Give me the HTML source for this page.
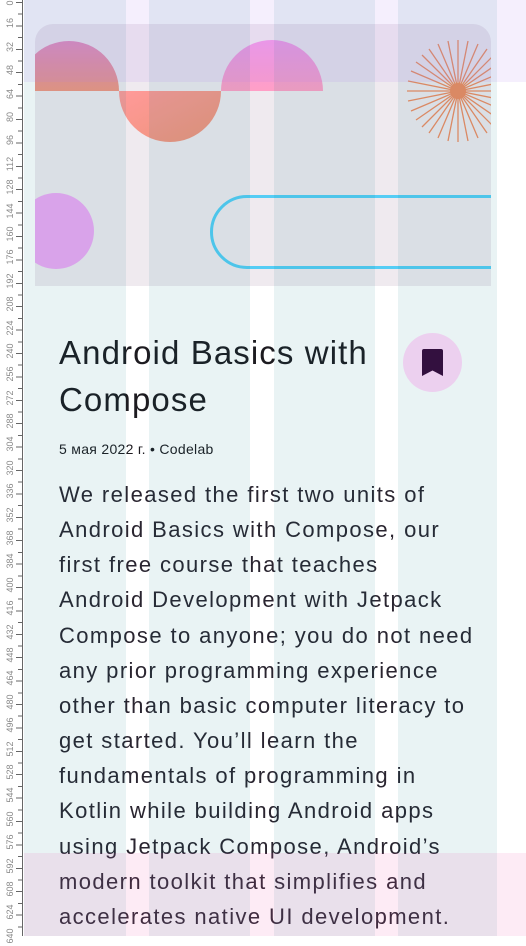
<!DOCTYPE html>
<html><head><meta charset="utf-8"><style>
*{margin:0;padding:0;box-sizing:border-box}
body{width:526px;height:936px;overflow:hidden;background:#fff;position:relative;font-family:"Liberation Sans",Roboto,sans-serif}
.abs{position:absolute}
.lbl{position:absolute;left:0;width:20px;height:12px;font-size:9px;color:#888;text-align:center;line-height:12px;transform:rotate(-90deg)}
.body{position:absolute;left:59px;top:477px;font-size:22px;line-height:35.15px;color:#2a2530;letter-spacing:1.4px;white-space:nowrap}
</style></head><body>
<div class="abs" style="left:35px;top:24px;width:456px;height:262px;border-radius:18px 18px 0 0;background:#efeaef;overflow:hidden">
<svg width="456" height="262" style="position:absolute;left:0;top:0">
<defs>
<linearGradient id="g1" x1="0" y1="0" x2="0" y2="1"><stop offset="0" stop-color="#e58dc0"/><stop offset="1" stop-color="#f19583"/></linearGradient>
<linearGradient id="g2" x1="0" y1="0" x2="1" y2="1"><stop offset="0" stop-color="#ff9a9a"/><stop offset="1" stop-color="#ee9378"/></linearGradient>
<linearGradient id="g3" x1="0" y1="0" x2="0" y2="1"><stop offset="0" stop-color="#f29be8"/><stop offset="1" stop-color="#ff9fc6"/></linearGradient>
</defs>
<path d="M-16 67 A50 50 0 0 1 84 67 Z" fill="url(#g1)"/>
<path d="M84 67 A51 51 0 0 0 186 67 Z" fill="url(#g2)"/>
<path d="M186 67 A51 51 0 0 1 288 67 Z" fill="url(#g3)"/>
<circle cx="21" cy="207" r="38" fill="#eea8f5"/>
<rect x="176.5" y="172.5" width="320" height="71" rx="35.5" fill="none" stroke="#55cdf5" stroke-width="3"/>
<g stroke="#ef8c62" stroke-width="1.3" transform="translate(423 67)">
<line x1="-51" y1="0" x2="51" y2="0"/><line x1="0" y1="-51" x2="0" y2="51"/>
<line x1="-50" y1="-10" x2="50" y2="10"/><line x1="-50" y1="10" x2="50" y2="-10"/>
<line x1="-10" y1="-50" x2="10" y2="50"/><line x1="10" y1="-50" x2="-10" y2="50"/>
<line x1="-47" y1="-20" x2="47" y2="20"/><line x1="-47" y1="20" x2="47" y2="-20"/>
<line x1="-20" y1="-47" x2="20" y2="47"/><line x1="20" y1="-47" x2="-20" y2="47"/>
<line x1="-42" y1="-29" x2="42" y2="29"/><line x1="-42" y1="29" x2="42" y2="-29"/>
<line x1="-29" y1="-42" x2="29" y2="42"/><line x1="29" y1="-42" x2="-29" y2="42"/>
<line x1="-36" y1="-36" x2="36" y2="36"/><line x1="-36" y1="36" x2="36" y2="-36"/>
</g>
<circle cx="423" cy="67" r="8" fill="#ef8c62"/>
</svg></div>
<div class="abs" style="left:59px;top:329px;font-size:33px;line-height:47px;color:#1d1b20;letter-spacing:1.1px">Android Basics with<br>Compose</div>
<div class="abs" style="left:59px;top:441px;font-size:14px;color:#1d1b20;letter-spacing:0.3px">5 мая 2022 г. • Codelab</div>
<div class="body">We released the first two units of<br>Android Basics with Compose, our<br>first free course that teaches<br>Android Development with Jetpack<br>Compose to anyone; you do not need<br>any prior programming experience<br>other than basic computer literacy to<br>get started. You’ll learn the<br>fundamentals of programming in<br>Kotlin while building Android apps<br>using Jetpack Compose, Android’s<br>modern toolkit that simplifies and<br>accelerates native UI development.</div>
<div class="abs" style="left:24px;top:0;width:102px;height:936px;background:rgba(0,115,125,0.086)"></div>
<div class="abs" style="left:149px;top:0;width:101px;height:936px;background:rgba(0,115,125,0.086)"></div>
<div class="abs" style="left:274px;top:0;width:101px;height:936px;background:rgba(0,115,125,0.086)"></div>
<div class="abs" style="left:398px;top:0;width:99px;height:936px;background:rgba(0,115,125,0.086)"></div>
<div class="abs" style="left:24px;top:0;width:502px;height:82px;background:rgba(170,120,240,0.12)"></div>
<div class="abs" style="left:0;top:853px;width:526px;height:83px;background:rgba(235,90,170,0.12)"></div>
<div class="abs" style="left:403px;top:333px;width:59px;height:59px;border-radius:50%;background:#ecd0ef"></div>
<svg class="abs" style="left:422px;top:349px" width="21" height="27"><path d="M2 0 H19 Q21 0 21 2 V27 L10.5 21.5 L0 27 V2 Q0 0 2 0Z" fill="#33103f"/></svg>
<div class="abs" style="left:0;top:0;width:24px;height:936px;background:#fff"></div>
<div class="abs" style="left:22px;top:0;width:1px;height:936px;background:#666"></div>
<div class="abs" style="left:18px;top:2px;width:4px;height:936px;background:repeating-linear-gradient(to bottom,#666 0,#666 1px,transparent 1px,transparent 11.7px)"></div>
<div class="abs" style="left:16px;top:2px;width:6px;height:936px;background:repeating-linear-gradient(to bottom,#666 0,#666 1px,transparent 1px,transparent 23.4px)"></div>
<div class="lbl" style="top:-3px">0</div><div class="lbl" style="top:17px">16</div><div class="lbl" style="top:41px">32</div><div class="lbl" style="top:64px">48</div><div class="lbl" style="top:88px">64</div><div class="lbl" style="top:111px">80</div><div class="lbl" style="top:134px">96</div><div class="lbl" style="top:158px">112</div><div class="lbl" style="top:181px">128</div><div class="lbl" style="top:205px">144</div><div class="lbl" style="top:228px">160</div><div class="lbl" style="top:251px">176</div><div class="lbl" style="top:275px">192</div><div class="lbl" style="top:298px">208</div><div class="lbl" style="top:322px">224</div><div class="lbl" style="top:345px">240</div><div class="lbl" style="top:368px">256</div><div class="lbl" style="top:392px">272</div><div class="lbl" style="top:415px">288</div><div class="lbl" style="top:438px">304</div><div class="lbl" style="top:462px">320</div><div class="lbl" style="top:485px">336</div><div class="lbl" style="top:509px">352</div><div class="lbl" style="top:532px">368</div><div class="lbl" style="top:555px">384</div><div class="lbl" style="top:579px">400</div><div class="lbl" style="top:602px">416</div><div class="lbl" style="top:626px">432</div><div class="lbl" style="top:649px">448</div><div class="lbl" style="top:672px">464</div><div class="lbl" style="top:696px">480</div><div class="lbl" style="top:719px">496</div><div class="lbl" style="top:743px">512</div><div class="lbl" style="top:766px">528</div><div class="lbl" style="top:789px">544</div><div class="lbl" style="top:813px">560</div><div class="lbl" style="top:836px">576</div><div class="lbl" style="top:860px">592</div><div class="lbl" style="top:883px">608</div><div class="lbl" style="top:906px">624</div><div class="lbl" style="top:930px">640</div>
</body></html>
